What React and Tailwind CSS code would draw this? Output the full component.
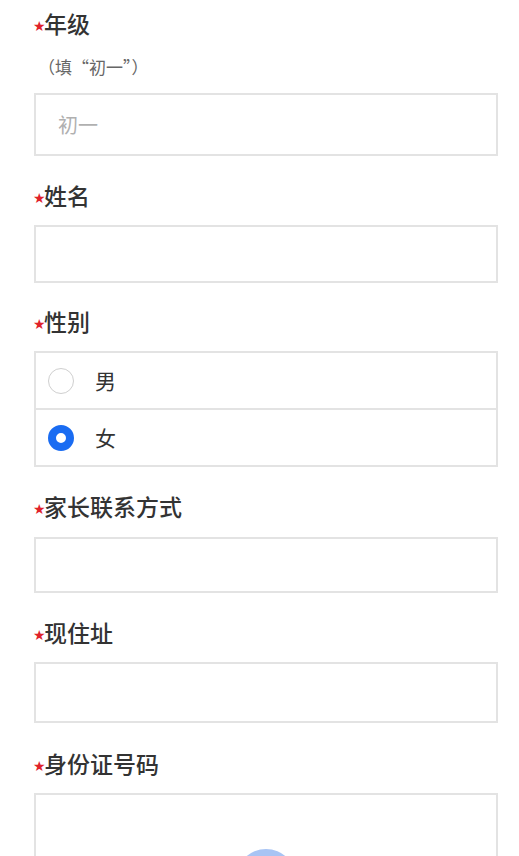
import React from "react";

const font = { fontFamily: '"Noto Sans CJK SC", "Noto Sans", sans-serif' };

function Label({ children }) {
  return (
    <div className="flex items-center h-[30px] leading-[30px] text-[23px] font-medium text-[#333]">
      <span className="relative top-[2px] text-[14px] text-[#e0222a] w-[11px] -ml-[1px] leading-none" style={{ fontFamily: '"DejaVu Sans", sans-serif' }}>★</span>
      <span className="relative -top-[1px]">{children}</span>
    </div>
  );
}

function Box({ h, children }) {
  return (
    <div className={`border-2 border-[#e3e3e3] bg-white ${h} flex items-center`}>{children}</div>
  );
}

function Radio({ checked, label }) {
  return (
    <div className="h-[55px] flex items-center pl-[12px]">
      {checked ? (
        <span className="w-[26px] h-[26px] rounded-full border-[8px] border-[#1a6cf2] bg-white" />
      ) : (
        <span className="w-[26px] h-[26px] rounded-full border-[1.5px] border-[#cfcfcf] bg-white" />
      )}
      <span className="ml-[21px] text-[21px] text-[#333]">{label}</span>
    </div>
  );
}

export default function App() {
  return (
    <div className="relative h-[856px] overflow-hidden bg-white" style={font}>
      <div className="pl-[34px] pr-[21px] pt-[9px]">
        <Label>年级</Label>
        <div className="mt-[16px] h-[24px] leading-[24px] text-[17px] text-[#666] pl-[4px]">（填“初一”）</div>
        <div className="mt-[14px]">
          <Box h="h-[63px]">
            <span className="pl-[22px] text-[20px] text-[#b0b0b0]">初一</span>
          </Box>
        </div>

        <div className="mt-[25px]"><Label>姓名</Label></div>
        <div className="mt-[14px]"><Box h="h-[58px]" /></div>

        <div className="mt-[24px]"><Label>性别</Label></div>
        <div className="mt-[14px] border-2 border-[#e3e3e3]">
          <Radio label="男" />
          <div className="h-[2px] bg-[#e3e3e3]" />
          <Radio checked label="女" />
        </div>

        <div className="mt-[25px]"><Label>家长联系方式</Label></div>
        <div className="mt-[15px]"><Box h="h-[56px]" /></div>

        <div className="mt-[25px]"><Label>现住址</Label></div>
        <div className="mt-[14px]"><Box h="h-[61px]" /></div>

        <div className="mt-[26px]"><Label>身份证号码</Label></div>
        <div className="mt-[14px]"><Box h="h-[80px]" /></div>
      </div>
      <div className="absolute left-[236px] top-[849px] w-[60px] h-[60px] rounded-full bg-[#a8c4f4]" />
    </div>
  );
}
